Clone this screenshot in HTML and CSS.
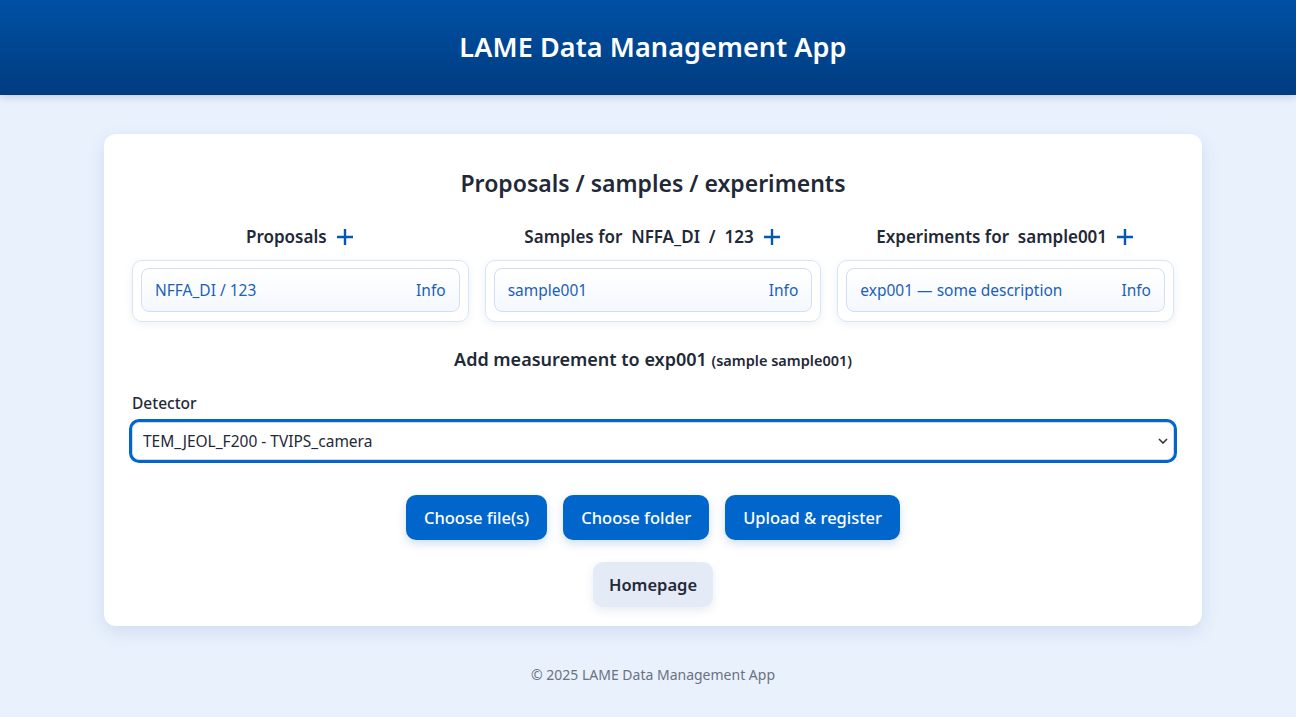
FILE: index.html
```html
<!DOCTYPE html>
<html lang="en">
<head>
<meta charset="utf-8">
<title>LAME Data Management App</title>
<link rel="stylesheet" href="styles.css">
</head>
<body>
<header class="app-header">
  <h1 class="app-title">LAME Data Management App</h1>
</header>
<main class="page">
  <section class="card">
    <h2 class="card-title">Proposals / samples / experiments</h2>
    <div class="columns">
      <div class="column">
        <div class="col-head">
          <span>Proposals</span>
          <button class="add-btn" aria-label="Add"><svg viewBox="0 0 20 20" width="20" height="20"><path d="M10 2v16M2 10h16" stroke="currentColor" stroke-width="2.4" fill="none"/></svg></button>
        </div>
        <div class="list-panel">
          <div class="list-item"><span>NFFA_DI / 123</span><span class="info">Info</span></div>
        </div>
      </div>
      <div class="column">
        <div class="col-head">
          <span>Samples for&nbsp; NFFA_DI&nbsp; /&nbsp; 123</span>
          <button class="add-btn" aria-label="Add"><svg viewBox="0 0 20 20" width="20" height="20"><path d="M10 2v16M2 10h16" stroke="currentColor" stroke-width="2.4" fill="none"/></svg></button>
        </div>
        <div class="list-panel">
          <div class="list-item"><span>sample001</span><span class="info">Info</span></div>
        </div>
      </div>
      <div class="column">
        <div class="col-head">
          <span>Experiments for&nbsp; sample001</span>
          <button class="add-btn" aria-label="Add"><svg viewBox="0 0 20 20" width="20" height="20"><path d="M10 2v16M2 10h16" stroke="currentColor" stroke-width="2.4" fill="none"/></svg></button>
        </div>
        <div class="list-panel">
          <div class="list-item"><span>exp001 — some description</span><span class="info">Info</span></div>
        </div>
      </div>
    </div>

    <h3 class="measure-title">Add measurement to exp001 <small>(sample sample001)</small></h3>

    <label class="field-label" for="detector">Detector</label>
    <div class="select-wrap">
      <select id="detector" class="select">
        <option>TEM_JEOL_F200 - TVIPS_camera</option>
      </select>
      <svg class="chevron" viewBox="0 0 10 6" width="10" height="6"><path d="M1 1l4 4 4-4" stroke="#333" stroke-width="1.6" fill="none"/></svg>
    </div>

    <div class="actions">
      <button class="btn btn-primary">Choose file(s)</button>
      <button class="btn btn-primary">Choose folder</button>
      <button class="btn btn-primary">Upload &amp; register</button>
    </div>
    <div class="home-row">
      <button class="btn btn-light">Homepage</button>
    </div>
  </section>
</main>
<footer class="app-footer">© 2025 LAME Data Management App</footer>
</body>
</html>
```

FILE: styles.css
```css
* { box-sizing: border-box; }
html, body { margin: 0; padding: 0; }
body {
  font-family: "Noto Sans", "Open Sans", sans-serif;
  background: #e9f1fd;
  color: #1f2937;
  min-height: 717px;
}
.app-header {
  height: 95px;
  padding-left: 10px;
  background: linear-gradient(180deg, #0050a4 0%, #003c80 100%);
  display: flex;
  align-items: center;
  justify-content: center;
  box-shadow: 0 2px 8px rgba(0, 40, 100, 0.18);
}
.app-title {
  margin: 0 0 2px;
  color: #fff;
  font-size: 27px;
  font-weight: 600;
  letter-spacing: 0.1px;
}
.page {
  padding-top: 39px;
  padding-left: 10px;
}
.card {
  width: 1098px;
  margin: 0 auto;
  background: #fff;
  border-radius: 12px;
  padding: 34px 28px 19px;
  box-shadow: 0 6px 18px rgba(30, 70, 140, 0.12);
}
.card-title {
  margin: 0;
  text-align: center;
  font-size: 23px;
  line-height: 30px;
  font-weight: 600;
  color: #1f2937;
}
.columns {
  display: grid;
  grid-template-columns: 1fr 1fr 1fr;
  gap: 16px;
  margin-top: 26px;
}
.col-head {
  display: flex;
  align-items: center;
  justify-content: center;
  gap: 8px;
  font-size: 17px;
  font-weight: 600;
  line-height: 26px;
  color: #1f2937;
}
.add-btn {
  border: 0;
  background: none;
  padding: 0;
  color: #0057b8;
  display: flex;
  cursor: pointer;
}
.list-panel {
  margin-top: 10px;
  border: 1px solid #d8e5f5;
  border-radius: 10px;
  padding: 7px 8px 9px;
  box-shadow: 0 2px 8px rgba(30, 70, 140, 0.08);
}
.list-item {
  height: 44px;
  display: flex;
  align-items: center;
  justify-content: space-between;
  padding: 0 13px 1px;
  border: 1px solid #cfe0f5;
  border-radius: 8px;
  background: linear-gradient(180deg, #ffffff 0%, #f4f8fe 100%);
  color: #1d5fb8;
  font-size: 15.5px;
}
.measure-title {
  margin: 24px 0 0;
  text-align: center;
  font-size: 18px;
  line-height: 26px;
  font-weight: 600;
}
.measure-title small {
  font-size: 14.5px;
  font-weight: 600;
}
.field-label {
  display: block;
  margin-top: 19px;
  font-size: 15.5px;
  line-height: 22px;
  font-weight: 500;
}
.select-wrap {
  position: relative;
  margin-top: 8px;
}
.select {
  width: 100%;
  height: 38px;
  appearance: none;
  -webkit-appearance: none;
  font-family: inherit;
  font-size: 15.5px;
  color: #1f2937;
  background: #fff;
  border: 1px solid #d1d9e4;
  border-radius: 7px;
  padding: 0 10px;
  box-shadow: 0 0 0 3px #0066cc;
  outline: none;
}
.chevron {
  position: absolute;
  right: 6px;
  top: 16px;
}
.actions {
  display: flex;
  justify-content: center;
  gap: 16px;
  margin-top: 35px;
}
.btn {
  height: 45px;
  border: 0;
  border-radius: 10px;
  padding: 0 18px;
  font-family: inherit;
  font-size: 16.5px;
  font-weight: 500;
  cursor: pointer;
}
.btn-primary {
  background: #0066cc;
  color: #fff;
  box-shadow: 0 4px 10px rgba(0, 80, 170, 0.18);
}
.btn-light {
  background: #e4ebf6;
  color: #1f2937;
  font-weight: 600;
  padding: 0 16px;
  box-shadow: 0 4px 10px rgba(30, 70, 140, 0.1);
}
.home-row {
  display: flex;
  justify-content: center;
  margin-top: 22px;
}
.app-footer {
  text-align: center;
  color: #6b7280;
  font-size: 14px;
  margin-top: 39px;
  padding-left: 10px;
}
```
